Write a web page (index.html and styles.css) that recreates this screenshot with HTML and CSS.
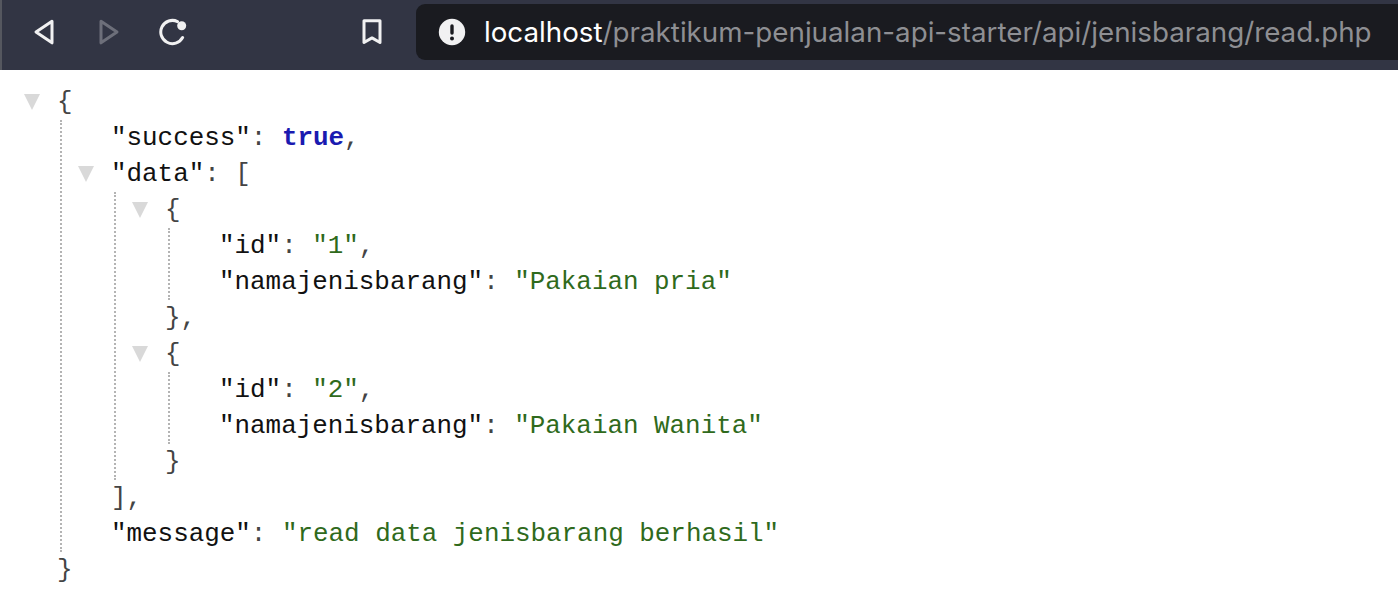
FILE: index.html
```html
<!DOCTYPE html>
<html lang="en">
<head>
<meta charset="utf-8">
<title>read.php</title>
<link rel="stylesheet" href="styles.css">
</head>
<body>
<header class="toolbar">
  <nav class="nav">
    <svg class="icon back" viewBox="0 0 24 28"><path d="M19 3.2 3 14l16 10.8z"/></svg>
    <svg class="icon forward" viewBox="0 0 24 28"><path d="M4 3.2 20 14 4 24.8z"/></svg>
    <svg class="icon reload" viewBox="0 0 28 28"><path d="M23.6 19.5A11.6 11.6 0 1 1 18.5 3.6"/><circle cx="22.7" cy="7.7" r="4.5"/></svg>
    <svg class="icon bookmark" viewBox="0 0 24 28"><path d="M3 2.8h16v21.7l-8-4.6-8 4.6z"/></svg>
  </nav>
  <div class="address">
    <svg class="alert" viewBox="0 0 28 28"><circle cx="14" cy="14" r="13.2"/><rect x="12.3" y="6.2" width="3.4" height="10.6" rx="1.7"/><circle cx="14" cy="20.4" r="2"/></svg>
    <span class="url"><span class="host">localhost</span>/praktikum-penjualan-api-starter/api/jenisbarang/read.php</span>
  </div>
</header>
<main class="json">
  <div class="line"><i class="arrow"></i><span class="punct">{</span></div>
  <div class="kids">
    <div class="line"><span class="key">"success"</span><span class="punct">: </span><span class="bool">true</span><span class="punct">,</span></div>
    <div class="line"><i class="arrow"></i><span class="key">"data"</span><span class="punct">: [</span></div>
    <div class="kids">
      <div class="line"><i class="arrow"></i><span class="punct">{</span></div>
      <div class="kids">
        <div class="line"><span class="key">"id"</span><span class="punct">: </span><span class="str">"1"</span><span class="punct">,</span></div>
        <div class="line"><span class="key">"namajenisbarang"</span><span class="punct">: </span><span class="str">"Pakaian pria"</span></div>
      </div>
      <div class="line"><span class="punct">},</span></div>
      <div class="line"><i class="arrow"></i><span class="punct">{</span></div>
      <div class="kids">
        <div class="line"><span class="key">"id"</span><span class="punct">: </span><span class="str">"2"</span><span class="punct">,</span></div>
        <div class="line"><span class="key">"namajenisbarang"</span><span class="punct">: </span><span class="str">"Pakaian Wanita"</span></div>
      </div>
      <div class="line"><span class="punct">}</span></div>
    </div>
    <div class="line"><span class="punct">],</span></div>
    <div class="line"><span class="key">"message"</span><span class="punct">: </span><span class="str">"read data jenisbarang berhasil"</span></div>
  </div>
  <div class="line"><span class="punct">}</span></div>
</main>
</body>
</html>
```
FILE: styles.css
```css
* { box-sizing: border-box; }
html, body { margin: 0; height: 100%; overflow: hidden; background: #fff; }

.toolbar {
  height: 70px;
  display: flex;
  background: #323544;
  border-left: 2px solid #55575f;
  padding: 4px 0 10px;
}
.nav {
  width: 414px;
  flex: none;
  display: flex;
  align-items: center;
}
.icon {
  fill: none;
  stroke: #f1f1f2;
  stroke-width: 3;
  stroke-linejoin: round;
  stroke-linecap: round;
  height: 28px;
  flex: none;
}
.back { width: 24px; margin-left: 31px; }
.forward { width: 24px; margin-left: 40px; stroke: #6d6f7a; }
.reload { width: 28px; margin-left: 38px; }
.reload circle { fill: #f1f1f2; stroke: none; }
.bookmark { width: 24px; margin-left: 174px; }

.address {
  flex: 1;
  display: flex;
  align-items: center;
  background: #1a1b20;
  border-radius: 9px 0 0 9px;
  padding-left: 22px;
  font-family: Inter, "Noto Sans", sans-serif;
  font-size: 27.75px;
  color: #8e8f93;
  white-space: nowrap;
}
.alert { width: 28px; height: 28px; flex: none; margin-right: 18px; fill: #1a1b20; }
.alert > circle:first-child { fill: #f1f1f2; }
.host { color: #fff; }

.json {
  padding: 14px 0 0 57px;
  font-family: "Liberation Mono", monospace;
  font-size: 25.9px;
  line-height: 36px;
  color: #000;
}
.line { position: relative; height: 36px; white-space: pre; }
.kids {
  margin-left: 3px;
  padding-left: 49px;
  border-left: 2px dotted #b4b4b4;
}
.arrow {
  position: absolute;
  left: -33px;
  top: 10px;
  width: 0;
  height: 0;
  border-left: 8px solid transparent;
  border-right: 8px solid transparent;
  border-top: 16px solid #d9d9d9;
}
.punct { color: #444; }
.key { color: #111; }
.bool { color: #1a1ab0; font-weight: 700; }
.str { color: #2f6a1c; }
```
